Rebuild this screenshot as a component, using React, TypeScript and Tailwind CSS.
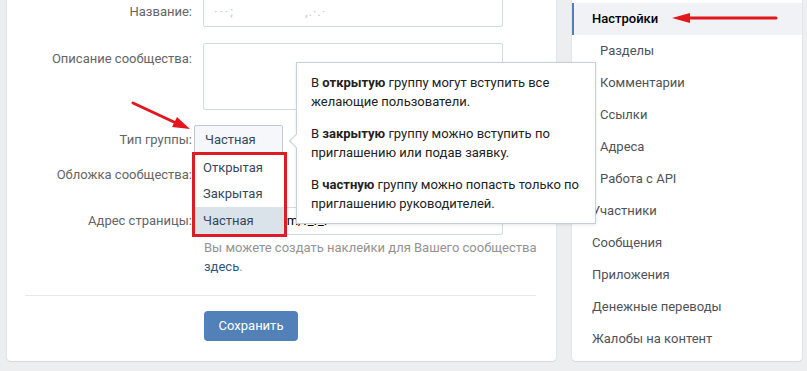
const menu = [
  { label: 'Настройки', sub: false, active: true },
  { label: 'Разделы', sub: true },
  { label: 'Комментарии', sub: true },
  { label: 'Ссылки', sub: true },
  { label: 'Адреса', sub: true },
  { label: 'Работа с API', sub: true },
  { label: 'Участники', sub: false },
  { label: 'Сообщения', sub: false },
  { label: 'Приложения', sub: false },
  { label: 'Денежные переводы', sub: false },
  { label: 'Жалобы на контент', sub: false },
];

const Label = ({ children, className = '' }: { children: React.ReactNode; className?: string }) => (
  <div className={'w-[185px] shrink-0 text-right text-[#656565] ' + className}>{children}</div>
);

export default function App() {
  return (
    <div
      className="relative flex h-[371px] w-[807px] items-start overflow-hidden bg-[#edeef0] text-[13px]"
      style={{ fontFamily: 'Roboto, "Liberation Sans", sans-serif' }}
    >
      {/* Main settings card */}
      <div className="ml-[7px] flex h-[361px] w-[549px] shrink-0 flex-col rounded-b-[4px] bg-white shadow-[0_1px_0_0_#d7d8db,0_0_0_1px_#e3e4e8]">
        <div className="-mt-[3px] flex h-[30px] items-center">
          <Label>Название:</Label>
          <div className="ml-[11px] flex h-[30px] w-[300px] items-center rounded-[2px] border border-[#d3d9de] px-[10px] text-[#c4c8cc]">
            <span className="tracking-[2px]">···;</span>
            <span className="ml-[70px] tracking-[1px]">,.·.·</span>
          </div>
        </div>

        <div className="mt-[16px] flex items-start">
          <Label className="pt-[6px]">Описание сообщества:</Label>
          <div className="ml-[11px] h-[67px] w-[300px] rounded-[2px] border border-[#d3d9de]" />
        </div>

        <div className="mt-[15px] flex h-[30px] items-center">
          <Label>Тип группы:</Label>
          <div className="relative ml-[2px]">
            <div className="flex h-[30px] w-[89px] items-center rounded-t-[2px] border border-[#c0cad5] bg-[#f5f7fa] pl-[10px] text-[#35475c]">
              Частная
            </div>
            {/* dropdown list, outlined in red */}
            <div className="absolute left-[-2px] top-[27px] z-20 flex w-[95px] flex-col border-[3px] border-[#dd1d25] bg-white text-[#35475c]">
              <div className="flex h-[26px] items-center pl-[8px]">Открытая</div>
              <div className="flex h-[26px] items-center pl-[8px]">Закрытая</div>
              <div className="flex h-[27px] items-center bg-[#dae2ea] pl-[8px]">Частная</div>
            </div>
          </div>
        </div>

        <div className="mt-[5px] flex h-[30px] items-center">
          <Label>Обложка сообщества:</Label>
        </div>

        <div className="mt-[17px] flex h-[28px] items-center">
          <Label>Адрес страницы:</Label>
          <div className="ml-[11px] flex h-[28px] w-[300px] items-center rounded-[2px] border border-[#d3d9de] pl-[10px] text-[#000]">
            https://vk.com/r_r_r
          </div>
        </div>

        <div className="ml-[197px] mt-[3px] leading-[19px] text-[#939393]">
          Вы можете создать наклейки для Вашего сообщества
          <br />
          <span className="text-[#2a5885]">здесь</span>.
        </div>

        <div className="ml-[18px] mt-[19px] h-px w-[511px] bg-[#e7e8ec]" />

        <button className="ml-[197px] mt-[15px] h-[30px] w-[94px] rounded-[4px] bg-[#5181b8] text-white">
          Сохранить
        </button>
      </div>

      {/* Right menu */}
      <div className="ml-[16px] flex h-[361px] w-[230px] shrink-0 flex-col rounded-b-[4px] bg-white pt-[3px] shadow-[0_1px_0_0_#d7d8db,0_0_0_1px_#e3e4e8]">
        {menu.map((m) => (
          <div
            key={m.label}
            className={
              m.active
                ? 'flex h-[32px] items-center border-l-2 border-[#5181b8] bg-[#f0f2f5] pl-[18px] font-medium text-[#000]'
                : m.sub
                  ? 'flex h-[32px] items-center pl-[28px] text-[#4f5358]'
                  : 'flex h-[32px] items-center pl-[20px] text-[#4f5358]'
            }
          >
            {m.label}
          </div>
        ))}
      </div>

      {/* Tooltip */}
      <div className="absolute left-[296px] top-[62px] z-10 w-[300px] border border-[#c5d0db] bg-white px-[14px] py-[10px] leading-[19px] text-[#222] shadow-[0_1px_3px_rgba(0,0,0,0.1)]">
        <div className="absolute left-[-6px] top-[73px] h-[10px] w-[10px] rotate-45 border-b border-l border-[#c5d0db] bg-white" />
        <p className="relative mb-[13px]">
          В <b>открытую</b> группу могут вступить все желающие пользователи.
        </p>
        <p className="relative mb-[13px]">
          В <b>закрытую</b> группу можно вступить по приглашению или подав заявку.
        </p>
        <p className="relative">
          В <b>частную</b> группу можно попасть только по приглашению руководителей.
        </p>
      </div>

      {/* Red annotation arrows */}
      <svg className="pointer-events-none absolute left-0 top-0 z-30" width="807" height="371">
        <line x1="133" y1="103" x2="176" y2="123" stroke="#e3151d" strokeWidth="3" strokeLinecap="round" />
        <polygon points="190,129 172,127 177,117" fill="#e3151d" />
        <line x1="776" y1="18" x2="686" y2="18" stroke="#e3151d" strokeWidth="3" strokeLinecap="round" />
        <polygon points="672,18 690,13 690,23" fill="#e3151d" />
      </svg>
    </div>
  );
}
